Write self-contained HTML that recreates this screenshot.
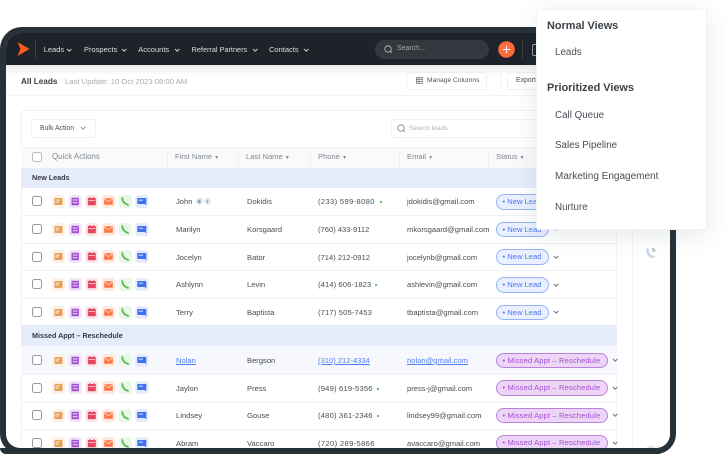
<!DOCTYPE html>
<html><head><meta charset="utf-8"><style>
html,body{margin:0;padding:0;background:#fff}
#p{position:relative;width:726px;height:454px;overflow:hidden;font-family:"Liberation Sans",sans-serif;background:#fff;filter:blur(.35px)}
#p div{position:absolute;white-space:nowrap}
.t{font-size:7.6px;color:#484e54;line-height:10px}
.h{font-size:7.6px;color:#7f8791;line-height:10px}
.n{font-size:7.5px;color:#dcdfe2;line-height:10px;top:44.5px}
.line{background:#f1f2f4;height:1px;left:21px;width:596px}
.sec{left:21px;width:596px;background:#e6ecfb}
.sect{left:32px;font-size:7.2px;font-weight:bold;color:#343a42;line-height:10px}
.cb{left:32px;width:8px;height:8px;border:1px solid #999;border-radius:2.5px;background:#fff}
.new,.mis{left:496px;height:13.5px;border-radius:8px;font-size:7.6px;line-height:13.5px}
.new{width:51px;border:1px solid #93b3f5;background:#eaf0ff;color:#4479f2;text-indent:5.5px}
.mis{width:110px;border:1px solid #bb82da;background:#ecd5f7;color:#a750d0;text-indent:5.5px;letter-spacing:.12px}
.dot{width:2px;height:2px;background:#5fc45f}
.d{left:555px;font-size:9.8px;color:#474e55;line-height:12px}
.dh{left:547px;font-size:10.9px;font-weight:bold;color:#3b4249;line-height:13px}
svg{position:absolute;overflow:visible}
</style></head><body><div id="p">

<svg width="0" height="0" style="left:0;top:0"><defs>
<g id="ic">
<rect x="0" y="0" width="13" height="13" rx="3" fill="#fdf0e6"/><rect x="2.5" y="3" width="8" height="7" rx=".7" fill="#e8a058"/><rect x="3.7" y="4.6" width="4" height=".9" fill="#fdf0e6"/><rect x="3.7" y="6.5" width="3" height=".9" fill="#fdf0e6"/>
<rect x="16.7" y="0" width="13" height="13" rx="3" fill="#f0e6f8"/><rect x="19.5" y="2.7" width="7.4" height="7.6" rx=".6" fill="#a44fd0"/><rect x="20.7" y="4.5" width="5" height=".9" fill="#f0e6f8"/><rect x="20.7" y="7.3" width="5" height=".9" fill="#f0e6f8"/>
<rect x="33.3" y="0" width="13" height="13" rx="3" fill="#fde6e8"/><rect x="35.8" y="3" width="8" height="7.2" rx=".7" fill="#e4475f"/><rect x="37.3" y="2" width="1" height="2" fill="#e4475f"/><rect x="41.3" y="2" width="1" height="2" fill="#e4475f"/><rect x="36.5" y="5" width="6.6" height=".7" fill="#fde6e8"/>
<rect x="50" y="0" width="13" height="13" rx="3" fill="#ffeae2"/><rect x="52.2" y="3.2" width="8.6" height="6.6" rx=".6" fill="#ff7440"/><path d="M52.5 3.8l4 3 4-3" fill="none" stroke="#ffeae2" stroke-width=".8"/>
<rect x="66.7" y="0" width="13" height="13" rx="3" fill="#e8f7e6"/><path d="M70.3 3c.1 3.4 2.2 5.8 5.8 6.9" fill="none" stroke="#4fb84f" stroke-width="1.7" stroke-linecap="round"/>
<rect x="83.3" y="0" width="13" height="13" rx="3" fill="#e4ebfd"/><path d="M85.8 3h8a.5.5 0 0 1 .5.5v6.8l-1.7-1.3h-6.8a.5.5 0 0 1-.5-.5V3.500a.5.5 0 0 1 .5-.5z" fill="#3f72ee"/><rect x="86.8" y="4.7" width="4.2" height=".9" fill="#e4ebfd"/>
</g>
<path id="chv" d="M0 0l2.2 2.2L4.4 0" fill="none" stroke-width="1"/>
</defs></svg>

<!-- frame -->
<div style="left:0;top:27px;width:676px;height:427px;background:#263238;border-radius:22px 22px 20px 20px"></div>
<div style="left:6px;top:33px;width:664px;height:415px;background:#fff;border-radius:15px 15px 14px 14px;overflow:hidden">
  <div style="left:0;top:0;width:664px;height:32px;background:#1e2329"></div>
  <div style="left:0;top:32px;width:664px;height:10px;background:linear-gradient(#ececec,#fff)"></div>
</div>

<svg style="left:17px;top:41px" width="13" height="16"><path d="M0.5 1L12.5 8 0.5 15 3.5 8z" fill="#ff5a26"/></svg>
<div style="left:35px;top:40px;width:1px;height:19px;background:#3a3f45"></div>

<div class="n" style="left:43.7px">Leads</div><svg style="left:67px;top:48.500px" width="5" height="3"><use href="#chv" stroke="#d0d3d6"/></svg>
<div class="n" style="left:84px">Prospects</div><svg style="left:122px;top:48.500px" width="5" height="3"><use href="#chv" stroke="#d0d3d6"/></svg>
<div class="n" style="left:138.3px">Accounts</div><svg style="left:175px;top:48.500px" width="5" height="3"><use href="#chv" stroke="#d0d3d6"/></svg>
<div class="n" style="left:191.6px;font-size:7.3px">Referral Partners</div><svg style="left:252.500px;top:48.500px" width="5" height="3"><use href="#chv" stroke="#d0d3d6"/></svg>
<div class="n" style="left:269px">Contacts</div><svg style="left:303.500px;top:48.500px" width="5" height="3"><use href="#chv" stroke="#d0d3d6"/></svg>

<div style="left:375px;top:40px;width:114px;height:18.5px;background:#33383e;border-radius:10px"></div>
<svg style="left:384px;top:45px" width="9" height="9"><circle cx="4" cy="4" r="3.2" fill="none" stroke="#c5c8cb" stroke-width=".8"/><path d="M6.4 6.4L8 8" stroke="#c5c8cb" stroke-width=".8"/></svg>
<div style="left:397px;top:44px;font-size:7px;line-height:10px;color:#a5a9ad">Search...</div>
<svg style="left:497.5px;top:41px" width="17" height="17"><circle cx="8.5" cy="8.5" r="8.3" fill="#ff6a3a"/><path d="M8.5 4.7v7.6M4.7 8.5h7.600" stroke="#fff" stroke-width="1"/></svg>
<div style="left:522px;top:40px;width:1px;height:19px;background:#3a3f45"></div>
<div style="left:532px;top:44px;width:5px;height:10px;border:1px solid #9a9da0;border-radius:2px"></div>

<!-- title bar -->
<div style="left:21px;top:76px;font-size:8.2px;font-weight:bold;color:#3a3f45;line-height:11px">All Leads</div>
<div style="left:65px;top:76px;font-size:7.7px;color:#a8acb0;line-height:11px">Last Update: 10 Oct 2023 08:00 AM</div>
<div style="left:406px;top:71.5px;width:79px;height:16px;border:1px solid #eff0f2;border-radius:3px"></div>
<svg style="left:415.5px;top:77px" width="7" height="7"><rect x=".4" y=".4" width="6" height="6" fill="none" stroke="#6a7078" stroke-width=".7"/><path d="M.4 2.5h6M.4 4.500h6M3 .4v6" stroke="#6a7078" stroke-width=".7"/></svg>
<div style="left:427px;top:75.5px;font-size:6.7px;color:#50565c;line-height:10px">Manage Columns</div>
<div style="left:500px;top:72px;width:1px;height:17px;background:#f0f1f3"></div>
<div style="left:507px;top:71.5px;width:40px;height:16px;border:1px solid #eff0f2;border-radius:3px"></div>
<div style="left:516px;top:75.5px;font-size:6.9px;color:#50565c;line-height:10px">Export</div>
<div style="left:6px;top:95px;width:664px;height:1px;background:#f3f4f5"></div>

<!-- table card -->
<div style="left:21px;top:110px;width:596px;height:338px;border:1px solid #f2f3f5;border-bottom:0;box-sizing:border-box"></div>
<div style="left:31px;top:119px;width:62.5px;height:16.5px;border:1px solid #eff0f2;border-radius:3px"></div>
<div style="left:40px;top:123.5px;font-size:6.9px;color:#50565c;line-height:10px">Bulk Action</div>
<svg style="left:81px;top:127px" width="5" height="3"><use href="#chv" stroke="#8a929c"/></svg>
<div style="left:391px;top:119px;width:160px;height:16.5px;border:1px solid #eff0f2;border-radius:3px"></div>
<svg style="left:397px;top:124px" width="9" height="9"><circle cx="4" cy="4" r="3.2" fill="none" stroke="#777" stroke-width=".8"/><path d="M6.4 6.4L8 8" stroke="#777" stroke-width=".8"/></svg>
<div style="left:409px;top:123.5px;font-size:6.6px;color:#b0b4b8;line-height:10px">Search leads</div>

<!-- header -->
<div style="left:21px;top:147px;width:596px;height:21px;background:#fafafb;border-top:1px solid #f0f1f3;box-sizing:border-box"></div>
<div style="left:167px;top:147px;width:1px;height:21px;background:#f0f1f3"></div>
<div style="left:238px;top:147px;width:1px;height:21px;background:#f0f1f3"></div>
<div style="left:309.5px;top:147px;width:1px;height:21px;background:#f0f1f3"></div>
<div style="left:399px;top:147px;width:1px;height:21px;background:#f0f1f3"></div>
<div style="left:488px;top:147px;width:1px;height:21px;background:#f0f1f3"></div>
<div class="cb" style="top:152px;border-color:#bbb"></div>
<div class="h" style="left:52px;top:152px;font-size:7.9px">Quick Actions</div>
<div class="h" style="left:175px;top:152px">First Name <span style="font-size:5px">▼</span></div>
<div class="h" style="left:246px;top:152px">Last Name <span style="font-size:5px">▼</span></div>
<div class="h" style="left:318px;top:152px">Phone <span style="font-size:5px">▼</span></div>
<div class="h" style="left:407px;top:152px">Email <span style="font-size:5px">▼</span></div>
<div class="h" style="left:496px;top:152px">Status <span style="font-size:5px">▼</span></div>

<!-- sections -->
<div class="sec" style="top:167.7px;height:20px"></div>
<div class="sect" style="top:173px">New Leads</div>
<div class="sec" style="top:325px;height:21px"></div>
<div class="sect" style="top:331px">Missed Appt – Reschedule</div>
<div style="left:21px;top:346px;width:596px;height:28px;background:#f6f8fd"></div>

<!-- row lines -->
<div class="line" style="top:215px"></div><div class="line" style="top:242.7px"></div><div class="line" style="top:270.3px"></div><div class="line" style="top:298px"></div>
<div class="line" style="top:374px"></div><div class="line" style="top:401.5px"></div><div class="line" style="top:429px"></div>

<!-- icons -->
<svg style="left:52px;top:195px" width="97" height="13"><use href="#ic"/></svg>
<svg style="left:52px;top:222.7px" width="97" height="13"><use href="#ic"/></svg>
<svg style="left:52px;top:250.3px" width="97" height="13"><use href="#ic"/></svg>
<svg style="left:52px;top:278px" width="97" height="13"><use href="#ic"/></svg>
<svg style="left:52px;top:305.7px" width="97" height="13"><use href="#ic"/></svg>
<svg style="left:52px;top:353.7px" width="97" height="13"><use href="#ic"/></svg>
<svg style="left:52px;top:381.3px" width="97" height="13"><use href="#ic"/></svg>
<svg style="left:52px;top:409px" width="97" height="13"><use href="#ic"/></svg>
<svg style="left:52px;top:436.7px" width="97" height="13"><use href="#ic"/></svg>

<!-- checkboxes -->
<div class="cb" style="top:196px"></div><div class="cb" style="top:224px"></div><div class="cb" style="top:251.5px"></div><div class="cb" style="top:279px"></div><div class="cb" style="top:307px"></div>
<div class="cb" style="top:355px"></div><div class="cb" style="top:382.5px"></div><div class="cb" style="top:410px"></div><div class="cb" style="top:438px"></div>

<!-- row 1 -->
<div class="t" style="left:176px;top:197px">John</div>
<svg style="left:196px;top:198px" width="15" height="7"><circle cx="3.3" cy="3.3" r="3.3" fill="#d5dced"/><circle cx="11.5" cy="3.3" r="3.3" fill="#dbe4f4"/><rect x="11" y="2" width="1" height="3" fill="#8fa3c4"/><rect x="2.3" y="2" width="2" height="3" fill="#8a96ad"/></svg>
<div class="t" style="left:247px;top:197px">Dokidis</div>
<div class="t" style="left:318px;top:197px;letter-spacing:.35px">(233) 599-8080</div><div class="dot" style="left:379.5px;top:201px"></div>
<div class="t" style="left:407px;top:197px">jdokidis@gmail.com</div>
<div class="new" style="top:194px">• New Lead</div><svg style="left:554px;top:200px" width="5" height="3"><use href="#chv" stroke="#6a7078"/></svg>
<!-- row 2 -->
<div class="t" style="left:176px;top:224.5px">Marilyn</div>
<div class="t" style="left:247px;top:224.5px">Korsgaard</div>
<div class="t" style="left:318px;top:224.5px">(760) 433-9112</div>
<div class="t" style="left:407px;top:224.5px">mkorsgaard@gmail.com</div>
<div class="new" style="top:221.5px">• New Lead</div><svg style="left:554px;top:228px" width="5" height="3"><use href="#chv" stroke="#6a7078"/></svg>
<!-- row 3 -->
<div class="t" style="left:176px;top:252.5px">Jocelyn</div>
<div class="t" style="left:247px;top:252.5px">Bator</div>
<div class="t" style="left:318px;top:252.5px">(714) 212-0912</div>
<div class="t" style="left:407px;top:252.5px">jocelynb@gmail.com</div>
<div class="new" style="top:249.2px">• New Lead</div><svg style="left:554px;top:255.5px" width="5" height="3"><use href="#chv" stroke="#6a7078"/></svg>
<!-- row 4 -->
<div class="t" style="left:176px;top:280px">Ashlynn</div>
<div class="t" style="left:247px;top:280px">Levin</div>
<div class="t" style="left:318px;top:280px;letter-spacing:.1px">(414) 606-1823</div><div class="dot" style="left:375px;top:284px"></div>
<div class="t" style="left:407px;top:280px">ashlevin@gmail.com</div>
<div class="new" style="top:277px">• New Lead</div><svg style="left:554px;top:283.5px" width="5" height="3"><use href="#chv" stroke="#6a7078"/></svg>
<!-- row 5 -->
<div class="t" style="left:176px;top:308px">Terry</div>
<div class="t" style="left:247px;top:308px">Baptista</div>
<div class="t" style="left:318px;top:308px;letter-spacing:.15px">(717) 505-7453</div>
<div class="t" style="left:407px;top:308px">tbaptista@gmail.com</div>
<div class="new" style="top:304.7px">• New Lead</div><svg style="left:554px;top:311px" width="5" height="3"><use href="#chv" stroke="#6a7078"/></svg>

<!-- row 6 -->
<div class="t" style="left:176px;top:356px;color:#4f80f2;text-decoration:underline">Nolan</div>
<div class="t" style="left:247px;top:356px">Bergson</div>
<div class="t" style="left:318px;top:356px;color:#4f80f2;text-decoration:underline">(310) 212-4334</div>
<div class="t" style="left:407px;top:356px;color:#4f80f2;text-decoration:underline">nolan@gmail.com</div>
<div class="mis" style="top:352.5px">• Missed Appt – Reschedule</div><svg style="left:613px;top:359px" width="5" height="3"><use href="#chv" stroke="#6a7078"/></svg>
<!-- row 7 -->
<div class="t" style="left:176px;top:383.5px">Jaylon</div>
<div class="t" style="left:247px;top:383.5px">Press</div>
<div class="t" style="left:318px;top:383.5px;letter-spacing:.2px">(949) 619-5356</div><div class="dot" style="left:376.5px;top:387.5px"></div>
<div class="t" style="left:407px;top:383.5px">press-j@gmail.com</div>
<div class="mis" style="top:380px">• Missed Appt – Reschedule</div><svg style="left:613px;top:386.5px" width="5" height="3"><use href="#chv" stroke="#6a7078"/></svg>
<!-- row 8 -->
<div class="t" style="left:176px;top:411px">Lindsey</div>
<div class="t" style="left:247px;top:411px">Gouse</div>
<div class="t" style="left:318px;top:411px;letter-spacing:.2px">(480) 361-2346</div><div class="dot" style="left:377px;top:415px"></div>
<div class="t" style="left:407px;top:411px">lindsey99@gmail.com</div>
<div class="mis" style="top:407.7px">• Missed Appt – Reschedule</div><svg style="left:613px;top:414px" width="5" height="3"><use href="#chv" stroke="#6a7078"/></svg>
<!-- row 9 -->
<div class="t" style="left:176px;top:438.5px">Abram</div>
<div class="t" style="left:247px;top:438.5px">Vaccaro</div>
<div class="t" style="left:318px;top:438.5px;letter-spacing:.35px">(720) 289-5866</div>
<div class="t" style="left:407px;top:438.5px">avaccaro@gmail.com</div>
<div class="mis" style="top:435.3px">• Missed Appt – Reschedule</div><svg style="left:613px;top:441.5px" width="5" height="3"><use href="#chv" stroke="#6a7078"/></svg>

<!-- clean right edge and bottom frame -->
<div style="left:617.5px;top:96px;width:52.5px;height:352px;background:#fff;border-bottom-right-radius:14px"></div>
<div style="left:632px;top:96px;width:1px;height:352px;background:#f1f2f4"></div>
<svg style="left:645px;top:247px" width="13" height="13"><path d="M2.5 2.5c-.5 3.5 2 7 6 7.5" fill="none" stroke="#c8d6f0" stroke-width="2.4" stroke-linecap="round"/><path d="M7 1.5c1.6.2 2.7 1.3 3 3M7 3.500c.6.1 1 .5 1.2 1.2" fill="none" stroke="#7a8088" stroke-width=".8"/></svg>
<div style="left:647px;top:446px;width:8px;height:2px;background:#dde5f2;border-radius:4px 4px 0 0"></div>
<div style="left:0;top:448px;width:660px;height:6px;background:#263238;border-radius:0 0 0 14px"></div>

<!-- dropdown -->
<div style="left:535.5px;top:9px;width:171.5px;height:221px;background:#fff;border:1px solid #f1f2f4;box-sizing:border-box;border-radius:3px;box-shadow:0 6px 24px rgba(60,70,90,.12)"></div>
<div class="dh" style="top:19.5px">Normal Views</div>
<div class="d" style="top:47px">Leads</div>
<div class="dh" style="top:81.5px">Prioritized Views</div>
<div class="d" style="top:109.5px">Call Queue</div>
<div class="d" style="top:140px">Sales Pipeline</div>
<div class="d" style="top:171px;font-size:10px">Marketing Engagement</div>
<div class="d" style="top:201.5px">Nurture</div>

</div></body></html>
